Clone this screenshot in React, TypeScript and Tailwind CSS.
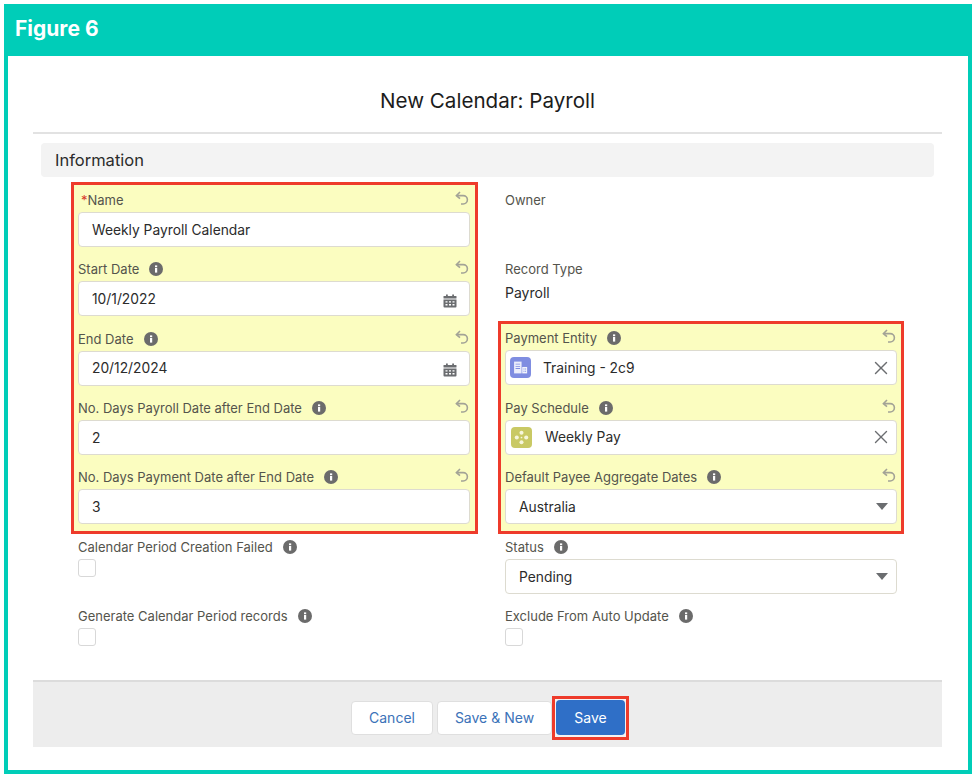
import type { ReactNode } from 'react'
import { X } from 'lucide-react'

function InfoDot() {
  return (
    <svg viewBox="0 0 14 14" className="ml-[10px] h-[14px] w-[14px] shrink-0">
      <circle cx="7" cy="7" r="7" fill="#6b6b6b" />
      <rect x="6" y="6" width="2.2" height="4.6" fill="#fff" />
      <rect x="6" y="3.4" width="2.2" height="1.8" fill="#fff" />
    </svg>
  )
}

function UndoIcon() {
  return (
    <svg viewBox="0 0 16 16" fill="none" stroke="#a3a396" strokeWidth="1.6" className="h-[16px] w-[16px]">
      <path d="M6 2 2.4 5.6 6 8.6" />
      <path d="M2.8 5.6h6.4a4 4 0 0 1 0 8.4H7" />
    </svg>
  )
}

function CalendarIcon() {
  return (
    <svg viewBox="0 0 14 14" className="mt-[4px] mr-[4px] block h-[14px] w-[14px]" fill="#6b6d70">
      <rect x="3" y="0.5" width="1.8" height="2.5" />
      <rect x="9.2" y="0.5" width="1.8" height="2.5" />
      <rect x="0.5" y="2" width="13" height="2.6" rx="0.6" />
      <path d="M.5 5.6h13v7a1 1 0 0 1-1 1H1.5a1 1 0 0 1-1-1z" />
      <path d="M2.5 7.2h2v1.4h-2zM6 7.2h2v1.4H6zM9.5 7.2h2v1.4h-2zM2.5 10h2v1.4h-2zM6 10h2v1.4H6zM9.5 10h2v1.4h-2z" fill="#fff" />
    </svg>
  )
}

function EntityIcon() {
  return (
    <div className="flex h-[21px] w-[21px] shrink-0 items-center justify-center rounded-[4px] bg-[#7f8de1]">
      <svg viewBox="0 0 14 14" className="h-[15px] w-[15px]" fill="#fff">
        <path d="M1 1.5h7v11H1z" opacity="0.85" />
        <path d="M2.4 3.5h4.2v.8H2.4zM2.4 5.5h4.2v.8H2.4zM2.4 7.5h4.2v.8H2.4z" fill="#7f8de1" />
        <path d="M8.6 6.5h4.6v6H8.6z" opacity="0.9" />
        <path d="M9.8 8h.9v.9h-.9zM11.3 8h.9v.9h-.9zM9.8 10h.9v.9h-.9zM11.3 10h.9v.9h-.9z" fill="#7f8de1" />
      </svg>
    </div>
  )
}

function ScheduleIcon() {
  return (
    <div className="flex h-[21px] w-[21px] shrink-0 items-center justify-center rounded-[4px] bg-[#c9c964]">
      <svg viewBox="0 0 14 14" className="h-[15px] w-[15px]" fill="#f6f6dc">
        <circle cx="7" cy="2.6" r="1.9" />
        <circle cx="2.6" cy="7" r="1.9" />
        <circle cx="11.4" cy="7" r="1.9" />
        <circle cx="7" cy="11.4" r="1.9" />
        <circle cx="7" cy="7" r="0.8" />
      </svg>
    </div>
  )
}

function Label({ text, info = true, required }: { text: string; info?: boolean; required?: boolean }) {
  return (
    <div className="flex h-[23px] items-start text-[13px] leading-[22px] text-[#54544c]">
      {required && <span className="ml-[3px] text-[#d8362a]">*</span>}
      <span>{text}</span>
      {info && (
        <span className="flex h-[22px] items-center">
          <InfoDot />
        </span>
      )}
    </div>
  )
}

function Field({
  label,
  info,
  required,
  undo,
  children,
}: {
  label: string
  info?: boolean
  required?: boolean
  undo?: boolean
  children?: ReactNode
}) {
  return (
    <div className="relative">
      <Label text={label} info={info} required={required} />
      {undo && (
        <div className="absolute top-[1px] right-0">
          <UndoIcon />
        </div>
      )}
      {children}
    </div>
  )
}

function Input({ children, pl = 'pl-[13px]' }: { children: ReactNode; pl?: string }) {
  return (
    <div className={`flex h-[35px] items-center rounded-[4px] border border-[#dddbd0] bg-white pr-[8px] text-[13.8px] text-[#2b2b2b] ${pl}`}>
      <span className="contents">{children}</span>
    </div>
  )
}

function Value({ children, className = '' }: { children: ReactNode; className?: string }) {
  return <span className={`pt-[1px] ${className}`}>{children}</span>
}

function Caret() {
  return <div className="ml-auto h-0 w-0 border-x-[6px] border-t-[7px] border-x-transparent border-t-[#6b6d70]" />
}

function Clear() {
  return <X className="mr-[-4px] ml-auto h-[22px] w-[22px] text-[#6b6d70]" strokeWidth={1.5} />
}

function Checkbox() {
  return <div className="h-[18px] w-[18px] rounded-[3px] border border-[#d8d8d8] bg-white" />
}

const highlight = 'border-[3px] border-[#ee3b2b] bg-[#fbfdc0] pl-[4px]'

export default function App() {
  return (
    <div className="h-[776px] w-[976px] bg-white p-[4px] font-['Inter',sans-serif]">
      <div className="flex h-[770px] w-[968px] flex-col bg-[#00cdb8] px-[4px] pb-[4px]">
        <div className="flex h-[52px] shrink-0 items-center pb-[2px] pl-[7px] text-[21px] font-bold text-white">Figure 6</div>
        <div className="flex flex-1 flex-col bg-white pr-[26px] pl-[25px]">
          <div className="flex h-[78px] shrink-0 items-center justify-center border-b-2 border-[#e2e2e2] pt-[14px] text-[20.6px] text-[#1c1c1c]">
            New Calendar: Payroll
          </div>
          <div className="mx-[8px] mt-[9px] flex h-[34px] items-center rounded-[4px] bg-[#f3f3f3] pl-[14px] text-[16.5px] text-[#2b2b2b]">
            Information
          </div>

          <div className="mt-[5px] ml-[38px] grid w-[833px] grid-cols-[407px_406px] gap-x-[20px]">
            {/* left column */}
            <div>
              <div className={`flex flex-col gap-[11.3px] pt-[4px] pr-[5px] pb-[7px] ${highlight}`}>
                <Field label="Name" info={false} required undo>
                  <Input>
                    <Value>Weekly Payroll Calendar</Value>
                  </Input>
                </Field>
                <Field label="Start Date" undo>
                  <Input>
                    <Value>10/1/2022</Value>
                    <span className="ml-auto">
                      <CalendarIcon />
                    </span>
                  </Input>
                </Field>
                <Field label="End Date" undo>
                  <Input>
                    <Value>20/12/2024</Value>
                    <span className="ml-auto">
                      <CalendarIcon />
                    </span>
                  </Input>
                </Field>
                <Field label="No. Days Payroll Date after End Date" undo>
                  <Input>
                    <Value>2</Value>
                  </Input>
                </Field>
                <Field label="No. Days Payment Date after End Date" undo>
                  <Input>
                    <Value>3</Value>
                  </Input>
                </Field>
              </div>
              <div className="mt-[2px] flex flex-col gap-[28px] pl-[7px]">
                <Field label="Calendar Period Creation Failed">
                  <Checkbox />
                </Field>
                <Field label="Generate Calendar Period records">
                  <Checkbox />
                </Field>
              </div>
            </div>

            {/* right column */}
            <div>
              <div className="h-[139px] pt-[7px] pl-[7px]">
                <Field label="Owner" info={false} />
                <div className="mt-[46px]">
                  <Field label="Record Type" info={false}>
                    <div className="mt-[2px] text-[14px] leading-[20px] text-[#2b2b2b]">Payroll</div>
                  </Field>
                </div>
              </div>
              <div className={`flex flex-col gap-[11.3px] pt-[3.4px] pr-[4px] pb-[7.2px] ${highlight}`}>
                <Field label="Payment Entity" undo>
                  <Input pl="pl-[4px]">
                    <EntityIcon />
                    <Value className="ml-[12px]">Training - 2c9</Value>
                    <Clear />
                  </Input>
                </Field>
                <Field label="Pay Schedule" undo>
                  <Input pl="pl-[5px]">
                    <ScheduleIcon />
                    <Value className="ml-[13px]">Weekly Pay</Value>
                    <Clear />
                  </Input>
                </Field>
                <Field label="Default Payee Aggregate Dates" undo>
                  <Input>
                    <Value>Australia</Value>
                    <Caret />
                  </Input>
                </Field>
              </div>
              <div className="mt-[2px] flex flex-col gap-[11px] pr-[7px] pl-[7px]">
                <Field label="Status">
                  <Input>
                    <Value>Pending</Value>
                    <Caret />
                  </Input>
                </Field>
                <Field label="Exclude From Auto Update">
                  <Checkbox />
                </Field>
              </div>
            </div>
          </div>

          <div className="mt-[34px] flex h-[67px] items-center justify-center border-t-2 border-[#dcdcdc] bg-[#ededed] pt-[6px] pl-[5px] text-[14px]">
            <button className="h-[34px] w-[82px] rounded-[4px] border border-[#dfdfdf] bg-white text-[#3b72b8]">Cancel</button>
            <button className="ml-[4px] h-[34px] w-[115px] rounded-[4px] border border-[#dfdfdf] bg-white text-[#3b72b8]">Save &amp; New</button>
            <div className="border-[3px] border-[#ee3b2b] bg-[#f3f3f3] px-[1px] py-[1.5px]">
              <button className="block h-[35px] w-[69px] rounded-[4px] bg-[#2f6fc7] text-white">Save</button>
            </div>
          </div>
        </div>
      </div>
    </div>
  )
}
